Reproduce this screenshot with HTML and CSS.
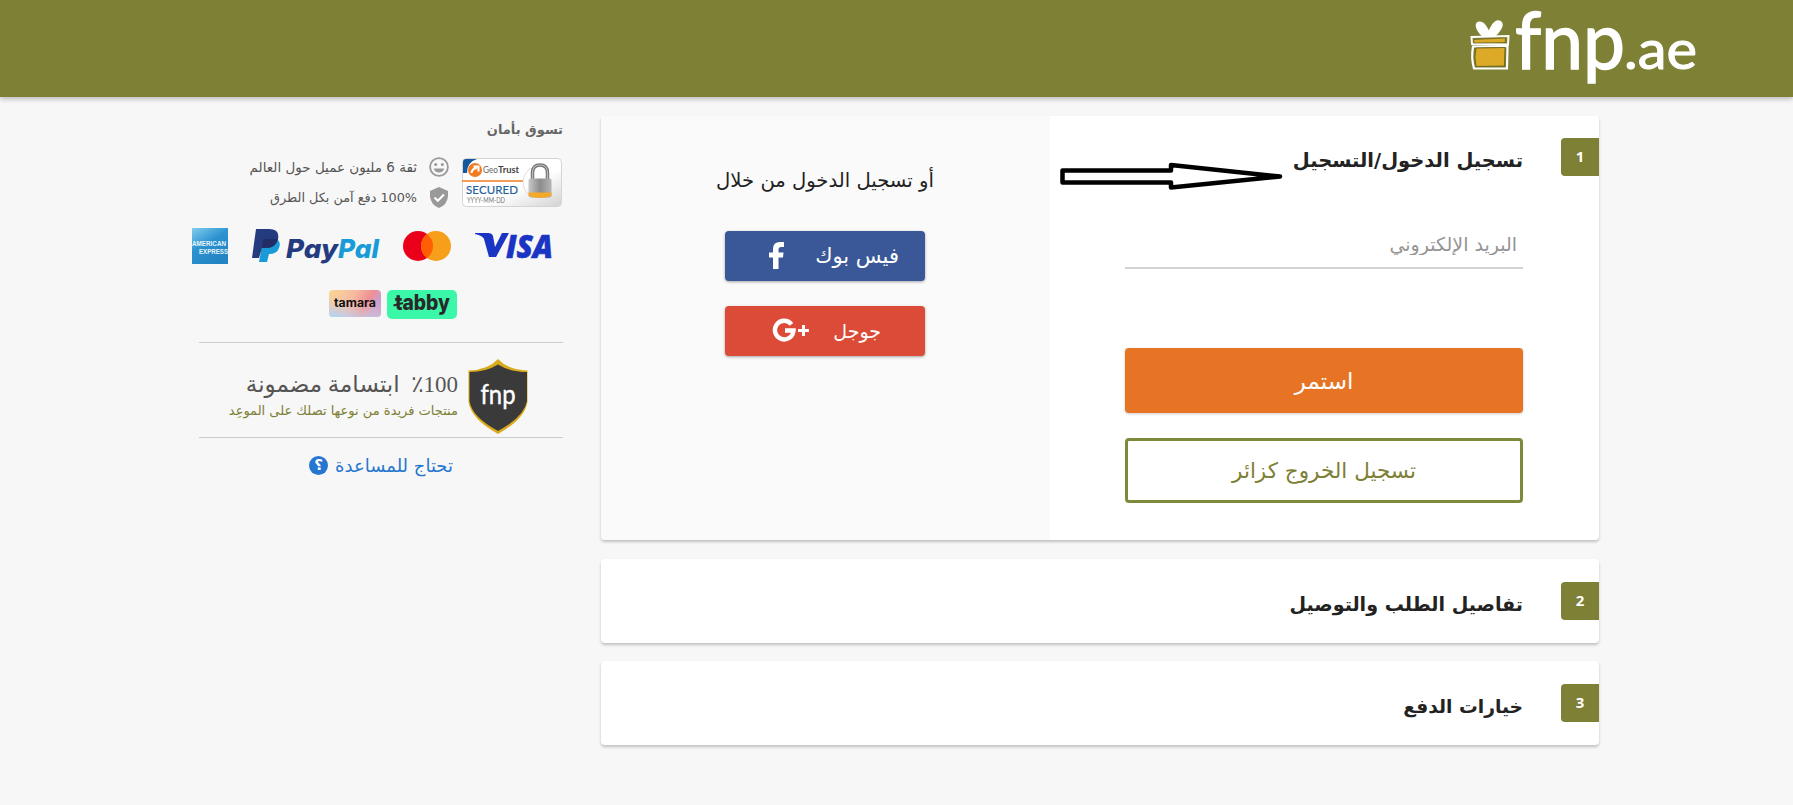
FILE: index.html
```
<!DOCTYPE html>
<html lang="ar" dir="rtl">
<head>
<meta charset="UTF-8">
<meta name="viewport" content="width=device-width, initial-scale=1.0">
<title>fnp.ae</title>
<link rel="stylesheet" href="styles.css">
</head>
<body>
<header class="header">
    <svg class="logo" width="232" height="97" viewBox="0 0 232 97" direction="ltr">
        <path d="M17 37C9 32 6 23 11 22.500S20 29 21 34C22 28 27 19 32 21.500S31 33 25 37Z" fill="#fff" stroke="#fff" stroke-width="1.800"/>
        <path d="M3.500 37 40.500 36 40 44.500 4 44Z" fill="#7d8035" stroke="#fff" stroke-width="2"/>
        <path d="M5.500 39.500 37.500 38 37 42.500 6 43Z" fill="#dcaa27" stroke="#5d5a1d" stroke-width=".6"/>
        <path d="M5 46.500 39.500 46 39 68.500 6 68.500Q3 58 5 46.500Z" fill="#7d8035" stroke="#fff" stroke-width="2.200"/>
        <path d="M8 48 37 47.500 36.500 66 8 66.500Q6 57 8 48Z" fill="#dcaa27" stroke="#5d5a1d" stroke-width=".8"/>
        <text class="logo-name" x="47" y="69" textLength="110" lengthAdjust="spacingAndGlyphs">fnp</text>
        <text class="logo-tld" x="156" y="69" textLength="73" lengthAdjust="spacingAndGlyphs">.ae</text>
    </svg>
</header>
<main class="page">
    <div class="steps">
        <section class="card login">
            <span class="step-no">1</span>
            <div class="login-main">
                <h2 class="step-title title-login">تسجيل الدخول/التسجيل</h2>
                <input class="email" type="email" placeholder="البريد الإلكتروني">
                <button class="btn btn-continue" type="button">استمر</button>
                <button class="btn btn-guest" type="button">تسجيل الخروج كزائر</button>
            </div>
            <div class="login-social">
                <p class="social-title">أو تسجيل الدخول من خلال</p>
                <button class="social facebook" type="button">
                    <span>فيس بوك</span>
                    <svg width="15" height="28" viewBox="0 0 15 28"><path d="M4 27V15.500H0V10.500H4V7Q4 0 11 0H15V5H12Q9.500 5 9.500 7.500V10.500H14.500L14 15.500H9.500V27Z" fill="#fff"/></svg>
                </button>
                <button class="social google" type="button">
                    <span>جوجل</span>
                    <svg width="36" height="24" viewBox="0 0 36 24"><path d="M18.500 5.300A9.300 9.300 0 1 0 20.500 11.500H12" fill="none" stroke="#fff" stroke-width="4.400"/><path d="M25 11.500H36M30.500 6V17" stroke="#fff" stroke-width="3"/></svg>
                </button>
            </div>
            <svg class="arrow" width="224" height="30" viewBox="0 0 224 30"><path d="M2.500 8.500H111V3L220 14.500 111 25.500V20.500H2.500Z" fill="#fff" stroke="#000" stroke-width="4.500" stroke-linejoin="round"/></svg>
        </section>
        <section class="card step">
            <span class="step-no">2</span>
            <h2 class="step-title title-delivery">تفاصيل الطلب والتوصيل</h2>
        </section>
        <section class="card step">
            <span class="step-no">3</span>
            <h2 class="step-title title-payment">خيارات الدفع</h2>
        </section>
    </div>
    <aside class="side">
        <h3 class="side-title">تسوق بأمان</h3>
        <div class="trust">
            <svg width="100" height="50" viewBox="0 0 100 50" direction="ltr">
                <defs>
                    <linearGradient id="metal"><stop offset="0" stop-color="#c9c9c9"/><stop offset=".5" stop-color="#8c8c8c"/><stop offset="1" stop-color="#b5b5b5"/></linearGradient>
                    <linearGradient id="seal" x2="1" y2="1"><stop offset=".6" stop-color="#fff"/><stop offset="1" stop-color="#d2d2d2"/></linearGradient>
                </defs>
                <rect x=".5" y=".5" width="99" height="48" rx="4" fill="url(#seal)" stroke="#d4d4d4"/>
                <path d="M1 15V4Q1 1 4 1H15Q5 4 5 15Z" fill="#14599d"/>
                <circle cx="13" cy="12" r="7" fill="#f07c22"/>
                <path d="M9.500 15Q10 10.500 15 10M11.500 8.500H16.500V13.500" fill="none" stroke="#fff" stroke-width="2"/>
                <text x="21" y="15" font-size="8.500" fill="#666" textLength="15" lengthAdjust="spacingAndGlyphs">Geo</text>
                <text x="36" y="15" font-size="8.500" font-weight="700" fill="#444" textLength="21" lengthAdjust="spacingAndGlyphs">Trust</text>
                <path d="M0 23H61" stroke="#f07c22" stroke-width="1.500"/>
                <text x="4" y="35.500" font-size="11.500" fill="#245f9c" stroke="#245f9c" stroke-width=".2" textLength="52" lengthAdjust="spacing">SECURED</text>
                <text x="5" y="45" font-size="7.500" fill="#777" textLength="38" lengthAdjust="spacingAndGlyphs">YYYY-MM-DD</text>
                <path d="M69 10A17 17 0 0 0 68 38" fill="none" stroke="#ddd"/>
                <path d="M70.500 22V15Q70.500 7 78 7T85.500 15V22" fill="none" stroke="#777" stroke-width="3.500"/>
                <path d="M70.500 22V15Q70.500 7 78 7T85.500 15V22" fill="none" stroke="#bbb" stroke-width="1.200"/>
                <rect x="66.500" y="20.500" width="23" height="19" rx="2" fill="url(#metal)"/>
                <path d="M66.500 34.500H89.500V38Q78 42 66.500 38Z" fill="#f4a92b"/>
            </svg>
            <ul class="trust-list">
                <li>
                    <svg width="20" height="20" viewBox="0 0 20 20"><circle cx="10" cy="10" r="8.900" fill="none" stroke="#999" stroke-width="1.800"/><circle cx="6.700" cy="7.500" r="1.500" fill="#999"/><circle cx="13.300" cy="7.500" r="1.500" fill="#999"/><path d="M4.700 11.500H15.300Q14 15.500 10 15.500T4.700 11.500Z" fill="#999"/></svg>
                    <span class="trust-customers">ثقة 6 مليون عميل حول العالم</span>
                </li>
                <li>
                    <svg width="20" height="21" viewBox="0 0 20 21"><path d="M10 0 19 4V9.500Q18 18 10 21 2 18 1 9.500V4Z" fill="#999"/><path d="M5.500 10.500 8.800 13.800 15 7.500" fill="none" stroke="#fff" stroke-width="2"/></svg>
                    <span class="trust-payment">100% دفع آمن بكل الطرق</span>
                </li>
            </ul>
        </div>
        <div class="cards">
            <svg width="80" height="26" viewBox="0 0 80 26" direction="ltr">
                <path d="M0 0H13Q17 0 18 3L20 14 27 0H34L21 24H14L9 6Q8 3 0 1Z" fill="#1a35c4"/>
                <text class="visa" x="31" y="24.500" textLength="47" lengthAdjust="spacingAndGlyphs">ISA</text>
            </svg>
            <svg width="48" height="30" viewBox="0 0 48 30">
                <circle cx="15" cy="15" r="15" fill="#eb001b"/>
                <circle cx="33" cy="15" r="15" fill="#f79e1b"/>
                <path d="M24 3A15 15 0 0 1 24 27A15 15 0 0 1 24 3Z" fill="#ff5f00"/>
            </svg>
            <svg width="128" height="35" viewBox="0 0 128 35" direction="ltr">
                <path d="M11 11H26Q29 14 27 19 25 25 17 25L15 33H7Z" fill="#189bd7"/>
                <path d="M4 0H17Q28 0 26 10 24 19 14 19H10L7 29H0Z" fill="#253b80"/>
                <path d="M11 10H26Q23 19 14 19H10Z" fill="#222d65"/>
                <text class="paypal" x="34" y="28.500" fill="#253b80" textLength="52" lengthAdjust="spacingAndGlyphs">Pay</text>
                <text class="paypal" x="86" y="28.500" fill="#189bd7" textLength="41" lengthAdjust="spacingAndGlyphs">Pal</text>
            </svg>
            <svg width="36" height="36" viewBox="0 0 36 36" direction="ltr">
                <defs><linearGradient id="amex" x2=".6" y2="1"><stop offset="0" stop-color="#82cdee"/><stop offset=".5" stop-color="#2c92cf"/><stop offset="1" stop-color="#2484c4"/></linearGradient></defs>
                <rect width="36" height="36" fill="url(#amex)"/>
                <text class="amex" x="0" y="18" textLength="34" lengthAdjust="spacingAndGlyphs">AMERICAN</text>
                <text class="amex" x="7" y="25.500" textLength="29" lengthAdjust="spacingAndGlyphs">EXPRESS</text>
            </svg>
        </div>
        <div class="later">
            <svg width="70" height="29" viewBox="0 0 70 29" direction="ltr">
                <rect width="70" height="29" rx="5" fill="#3bf7a8"/>
                <text class="tabby" x="8" y="20" textLength="55" lengthAdjust="spacingAndGlyphs">tabby</text>
                <path d="M6.500 15.500 16 13" stroke="#292929" stroke-width="2"/>
            </svg>
            <svg width="52" height="27" viewBox="0 0 52 27" direction="ltr">
                <defs><linearGradient id="tamara" x1="0" y1="0" x2="1" y2=".3"><stop offset="0" stop-color="#fbd98e"/><stop offset=".5" stop-color="#f7b8a0"/><stop offset=".8" stop-color="#ef8f94"/><stop offset="1" stop-color="#c9a0d0"/></linearGradient>
                <linearGradient id="tint" x1="0" y1="1" x2=".4" y2=".2"><stop offset="0" stop-color="#a9d6ff"/><stop offset="1" stop-color="#f7c8b8" stop-opacity="0"/></linearGradient></defs>
                <rect width="52" height="27" rx="4" fill="url(#tamara)"/>
                <rect width="52" height="27" rx="4" fill="url(#tint)"/>
                <text class="tamara" x="5" y="17" textLength="42" lengthAdjust="spacingAndGlyphs">tamara</text>
            </svg>
        </div>
        <div class="promise">
            <svg width="60" height="76" viewBox="0 0 60 76" direction="ltr">
                <path d="M30 0Q40 11 59.500 11.500V43Q57 60 30 75 3 60 .5 43V11.500Q20 11 30 0Z" fill="#d9ab1c"/>
                <path d="M30 5.500Q42 13 59 13V42Q56 58 30 72 4 58 1.500 42V13Q18 13 30 5.500Z" fill="#3a3a3a"/>
                <text class="shield-name" x="12.500" y="45" textLength="35" lengthAdjust="spacingAndGlyphs">fnp</text>
            </svg>
            <div class="promise-text">
                <p class="promise-title">100&rlm;٪&nbsp; ابتسامة مضمونة</p>
                <p class="promise-sub">منتجات فريدة من نوعها تصلك على الموعِد</p>
            </div>
        </div>
        <a class="help" href="#">
            <span>تحتاج للمساعدة</span>
            <i class="help-icon">؟</i>
        </a>
    </aside>
</main>
</body>
</html>
```
FILE: styles.css
```
* {
    box-sizing: border-box;
}

body {
    margin: 0;
    background-color: #f7f7f7;
    color: #222;
    font-family: "DejaVu Sans", sans-serif;
}

h2, h3, p, ul {
    margin: 0;
    padding: 0;
}

span, p, h2, h3 {
    white-space: nowrap;
}

button {
    font-family: inherit;
    padding: 0;
    cursor: pointer;
}

svg {
    flex: none;
    overflow: visible;
    font-family: "Lato", sans-serif;
}

.header {
    height: 97px;
    padding-right: 93px;
    background-color: #7d8035;
    box-shadow: 0 2px 5px rgba(0, 0, 0, .25);
}

.logo {
    display: block;
}

.logo-name {
    font: 79px "Lato", sans-serif;
    fill: #fff;
    stroke: #fff;
    stroke-width: 1.5px;
}

.logo-tld {
    font: 54px "Lato", sans-serif;
    fill: #fff;
    stroke: #fff;
    stroke-width: 1px;
}

.page {
    display: flex;
    gap: 38px;
    padding: 19px 194px 0 0;
}

.steps {
    width: 998px;
}

.card {
    display: flex;
    background-color: #fff;
    border-radius: 4px;
    box-shadow: 0 2px 3px rgba(0, 0, 0, .22);
}

.login {
    position: relative;
    height: 424px;
    margin-bottom: 19px;
}

.step {
    height: 84px;
    margin-bottom: 18px;
}

.step-no {
    width: 38px;
    height: 38px;
    margin: 22px 0 0 38px;
    border-radius: 4px 0 0 4px;
    background-color: #7d8035;
    color: #fff;
    font: bold 15px/36px "Noto Sans", sans-serif;
    text-align: center;
}

.step .step-no {
    margin-top: 23px;
}

.step-title {
    font-weight: bold;
    line-height: 30px;
}

.step .step-title {
    margin-top: 31px;
}

.title-login {
    font-size: 19.5px;
}

.title-delivery {
    font-size: 19.1px;
}

.title-payment {
    font-size: 18.7px;
}

.login-main {
    width: 473px;
    padding: 30px 0 0 75px;
}

.email {
    display: block;
    width: 398px;
    height: 44px;
    margin-top: 49px;
    padding: 0 6px 5px;
    border: 0;
    border-bottom: 2px solid #d4d4d4;
    background: none;
    font: 19px "DejaVu Sans", sans-serif;
    direction: rtl;
}

.email::placeholder {
    color: #949494;
}

.btn {
    display: block;
    width: 398px;
    height: 65px;
    border-radius: 4px;
    font-size: 21.5px;
}

.btn-continue {
    margin-top: 79px;
    border: 0;
    background-color: #e77425;
    box-shadow: 0 1px 3px rgba(0, 0, 0, .2);
    color: #fff;
    font-size: 23px;
}

.btn-guest {
    margin-top: 25px;
    border: 3px solid #7d8a3c;
    background-color: #fff;
    color: #7d8035;
}

.login-social {
    display: flex;
    flex-direction: column;
    align-items: center;
    width: 449px;
    padding: 50px 1px 0 0;
    border-radius: 0 0 0 4px;
    background-color: #fafafa;
}

.social-title {
    font-size: 19.6px;
    line-height: 30px;
    margin-bottom: 35px;
}

.social {
    display: flex;
    align-items: center;
    width: 200px;
    height: 50px;
    margin-bottom: 25px;
    border: 0;
    border-radius: 4px;
    box-shadow: 0 1px 3px rgba(0, 0, 0, .35);
    color: #fff;
}

.facebook {
    padding-right: 26px;
    gap: 31px;
    background-color: #3a5897;
    font-size: 21px;
}

.google {
    padding-right: 44px;
    gap: 24px;
    background-color: #db4b37;
    font-size: 19px;
}

.arrow {
    position: absolute;
    left: 459px;
    top: 46px;
}

.side {
    width: 371px;
}

.side-title {
    margin: 0 0 14px;
    color: #666;
    font-size: 13px;
    line-height: 28px;
}

.trust {
    display: flex;
    gap: 13px;
    height: 50px;
    padding-right: 1px;
}

.trust-list {
    margin-top: -6px;
    list-style: none;
    color: #555;
}

.trust-list li {
    display: flex;
    align-items: center;
    gap: 12px;
    height: 30px;
}

.trust-customers {
    font-size: 13.5px;
}

.trust-payment {
    font-size: 12.8px;
}

.cards {
    display: flex;
    align-items: center;
    justify-content: space-between;
    height: 36px;
    padding-right: 8px;
    margin-top: 20px;
}

.visa {
    font: italic 800 32px "Open Sans", sans-serif;
    fill: #1a35c4;
    stroke: #1a35c4;
    stroke-width: .6px;
}

.paypal {
    font: italic 800 26px "Inter", sans-serif;
}

.amex {
    font: bold 7px "Liberation Sans", sans-serif;
    fill: #e6f5fc;
}

.later {
    display: flex;
    gap: 6px;
    width: 364px;
    height: 53px;
    margin-top: 26px;
    padding-right: 106px;
    border-bottom: 1px solid #ccc;
}

.tabby {
    font: 800 22px "Inter", sans-serif;
    fill: #292929;
}

.tamara {
    font: bold 12px "Inter", sans-serif;
    fill: #111;
}

.promise {
    display: flex;
    gap: 10px;
    width: 364px;
    height: 95px;
    padding: 16px 35px 0 0;
    border-bottom: 1px solid #ccc;
}

.shield-name {
    font: 26px "Lato", sans-serif;
    fill: #fff;
    stroke: #fff;
    stroke-width: .4px;
}

.promise-text {
    padding-top: 11px;
}

.promise-title {
    color: #555;
    font-size: 23px;
    line-height: 30px;
    font-family: "Liberation Serif", "DejaVu Sans", serif;
}

.promise-sub {
    color: #7d8035;
    font-size: 13px;
    line-height: 22px;
}

.help {
    display: flex;
    align-items: center;
    gap: 7px;
    margin-top: 13px;
    padding-right: 110px;
    height: 28px;
    color: #2676d0;
    font-size: 18px;
    text-decoration: none;
}

.help-icon {
    width: 19px;
    height: 19px;
    border-radius: 50%;
    background-color: #2676d0;
    color: #fff;
    font: bold 15px/18px "DejaVu Sans", sans-serif;
    text-align: center;
}
```
